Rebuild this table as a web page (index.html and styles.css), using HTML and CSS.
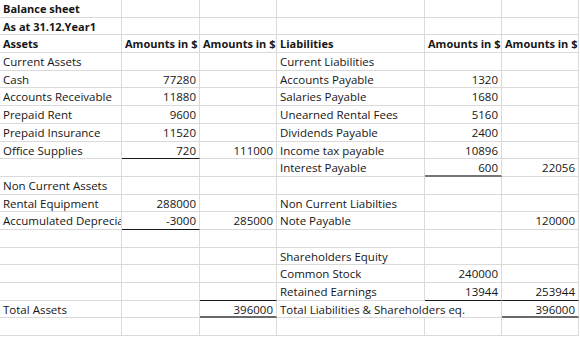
FILE: index.html
```html
<!DOCTYPE html>
<html>
<head>
<meta charset="utf-8">
<link rel="stylesheet" href="styles.css">
<title>Balance sheet</title>
</head>
<body>
<div class="sheet">
  <!-- row 0 -->
  <div class="c b">Balance sheet</div><div class="c"></div><div class="c"></div><div class="c"></div><div class="c"></div><div class="c"></div>
  <!-- row 1 -->
  <div class="c b">As at 31.12.Year1</div><div class="c"></div><div class="c"></div><div class="c"></div><div class="c"></div><div class="c"></div>
  <!-- row 2 -->
  <div class="c b">Assets</div><div class="c b">Amounts in $</div><div class="c b">Amounts in $</div><div class="c b">Liabilities</div><div class="c b">Amounts in $</div><div class="c b">Amounts in $</div>
  <!-- row 3 -->
  <div class="c">Current Assets</div><div class="c"></div><div class="c"></div><div class="c">Current Liabilities</div><div class="c"></div><div class="c"></div>
  <!-- row 4 -->
  <div class="c">Cash</div><div class="c n">77280</div><div class="c"></div><div class="c">Accounts Payable</div><div class="c n">1320</div><div class="c"></div>
  <!-- row 5 -->
  <div class="c">Accounts Receivable</div><div class="c n">11880</div><div class="c"></div><div class="c">Salaries Payable</div><div class="c n">1680</div><div class="c"></div>
  <!-- row 6 -->
  <div class="c">Prepaid Rent</div><div class="c n">9600</div><div class="c"></div><div class="c">Unearned Rental Fees</div><div class="c n">5160</div><div class="c"></div>
  <!-- row 7 -->
  <div class="c">Prepaid Insurance</div><div class="c n">11520</div><div class="c"></div><div class="c">Dividends Payable</div><div class="c n">2400</div><div class="c"></div>
  <!-- row 8 -->
  <div class="c">Office Supplies</div><div class="c n ul">720</div><div class="c n">111000</div><div class="c">Income tax payable</div><div class="c n">10896</div><div class="c"></div>
  <!-- row 9 -->
  <div class="c"></div><div class="c"></div><div class="c"></div><div class="c">Interest Payable</div><div class="c n ulg">600</div><div class="c n">22056</div>
  <!-- row 10 -->
  <div class="c">Non Current Assets</div><div class="c"></div><div class="c"></div><div class="c"></div><div class="c"></div><div class="c"></div>
  <!-- row 11 -->
  <div class="c">Rental Equipment</div><div class="c n">288000</div><div class="c"></div><div class="c">Non Current Liabilties</div><div class="c"></div><div class="c"></div>
  <!-- row 12 -->
  <div class="c clip">Accumulated Depreciation</div><div class="c n ul">-3000</div><div class="c n">285000</div><div class="c">Note Payable</div><div class="c"></div><div class="c n">120000</div>
  <!-- row 13 -->
  <div class="c"></div><div class="c"></div><div class="c"></div><div class="c"></div><div class="c"></div><div class="c"></div>
  <!-- row 14 -->
  <div class="c"></div><div class="c"></div><div class="c"></div><div class="c">Shareholders Equity</div><div class="c"></div><div class="c"></div>
  <!-- row 15 -->
  <div class="c"></div><div class="c"></div><div class="c"></div><div class="c">Common Stock</div><div class="c n">240000</div><div class="c"></div>
  <!-- row 16 -->
  <div class="c"></div><div class="c"></div><div class="c ul"></div><div class="c">Retained Earnings</div><div class="c n ul">13944</div><div class="c n ul">253944</div>
  <!-- row 17 -->
  <div class="c">Total Assets</div><div class="c"></div><div class="c n dbl">396000</div><div class="c span2">Total Liabilities &amp; Shareholders eq.</div><div class="c n dbl">396000</div>
  <!-- row 18 -->
  <div class="c"></div><div class="c"></div><div class="c"></div><div class="c"></div><div class="c"></div><div class="c"></div>
</div>
</body>
</html>
```

FILE: styles.css
```css
html, body {
  margin: 0;
  padding: 0;
  background: #ffffff;
}

.sheet {
  display: grid;
  grid-template-columns: 122px 78px 77px 148px 77px 77px;
  grid-auto-rows: 17.7px;
  font-family: "Open Sans", "Noto Sans", sans-serif;
  font-size: 11.5px;
  color: #161616;
}

.c {
  box-sizing: border-box;
  border-right: 1px solid #dadada;
  border-bottom: 1px solid #dadada;
  padding: 0 3px;
  line-height: 17px;
  white-space: nowrap;
  overflow: visible;
}

.b {
  font-weight: bold;
  font-size: 11px;
}

.n {
  text-align: right;
}

.clip {
  overflow: hidden;
  text-overflow: clip;
  padding-right: 0;
}

.ul {
  border-bottom: 1px solid #1a1a1a;
}

.ulg {
  border-bottom: 2px solid #777777;
}

.dbl {
  border-bottom: 2px solid #6a6a6a;
}

.span2 {
  grid-column: span 2;
}
```
